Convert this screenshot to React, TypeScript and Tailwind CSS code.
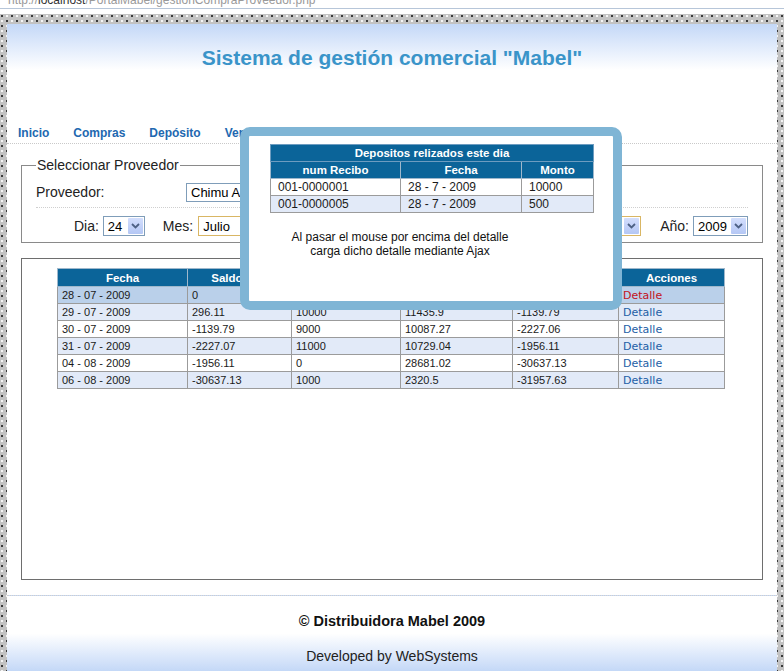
import React from "react";

const SANS = "font-['Liberation_Sans',Arial,Helvetica,sans-serif]";
const VERDANA = "font-['DejaVu_Sans',Verdana,sans-serif]";

const navItems = ["Inicio", "Compras", "Depósito", "Ventas", "Clientes", "Proveedores", "Reportes"];

const headers = ["Fecha", "Saldo Ant.", "Depósito", "Compras", "Saldo", "Acciones"];

const rows = [
  ["28 - 07 - 2009", "0", "10500", "10203.89", "296.11"],
  ["29 - 07 - 2009", "296.11", "10000", "11435.9", "-1139.79"],
  ["30 - 07 - 2009", "-1139.79", "9000", "10087.27", "-2227.06"],
  ["31 - 07 - 2009", "-2227.07", "11000", "10729.04", "-1956.11"],
  ["04 - 08 - 2009", "-1956.11", "0", "28681.02", "-30637.13"],
  ["06 - 08 - 2009", "-30637.13", "1000", "2320.5", "-31957.63"],
];

const depositos = [
  ["001-0000001", "28 - 7 - 2009", "10000"],
  ["001-0000005", "28 - 7 - 2009", "500"],
];

function Chevron() {
  return (
    <svg width="9" height="6" viewBox="0 0 9 6">
      <polyline points="1,1 4.5,4.5 8,1" fill="none" stroke="#4d6185" strokeWidth="1.8" />
    </svg>
  );
}

function Select({ value, className, focus }: { value: string; className: string; focus?: boolean }) {
  return (
    <div className={`flex items-center border bg-white ${focus ? "border-[#d9b664]" : "border-[#7f9db9]"} ${className}`}>
      <span className="pl-[4px] text-[13px] leading-none text-black">{value}</span>
      <span className="my-[1px] mr-[1px] ml-auto flex w-[15px] items-center justify-center self-stretch rounded-[1px] bg-linear-to-b from-[#d3defd] to-[#b4c7f5]">
        <Chevron />
      </span>
    </div>
  );
}

export default function App() {
  return (
    <div className={`relative flex h-[671px] flex-col overflow-hidden bg-white ${SANS}`}>
      {/* address bar, mostly scrolled off */}
      <div className="h-[14px] bg-white">
        <div className="h-[9px] overflow-hidden border-b border-[#b7c6d9] pl-[8px]">
          <div className="-mt-[7px] text-[12px] leading-[14px] text-[#9a9a9a]">
            http://<span className="text-[#333]">localhost</span>/PortalMabel/gestionCompraProveedor.php
          </div>
        </div>
      </div>

      {/* dotted frame */}
      <div className="flex min-h-0 flex-1 bg-[#c2c2c2] bg-[radial-gradient(circle_at_2px_2px,#3a3a3a_0.8px,transparent_1.4px),radial-gradient(circle_at_7px_7px,#3a3a3a_0.8px,transparent_1.4px),radial-gradient(circle_at_7px_2px,#f4f4f4_0.8px,transparent_1.4px),radial-gradient(circle_at_2px_7px,#f4f4f4_0.8px,transparent_1.4px)] bg-[length:10px_10px] pt-[10px] pr-[7px] pl-[7px]">
        <div className="flex flex-1 flex-col bg-white">
          {/* header */}
          <div className="bg-linear-to-b from-[#c4d8f7] to-white pt-[22px]">
            <h1 className="text-center text-[21px] leading-[24px] font-bold text-[#3a94c9]">
              Sistema de gestión comercial "Mabel"
            </h1>
          </div>

          {/* nav */}
          <nav className="mt-[55px] flex gap-[24px] border-b border-dotted border-[#c9c9c9] pb-[2px] pl-[11px]">
            {navItems.map((n) => (
              <span key={n} className="text-[12px] leading-[16px] font-bold text-[#2268b0]">
                {n}
              </span>
            ))}
          </nav>

          {/* proveedor */}
          <fieldset className="mx-[14px] mt-[13px] border border-[#8a8a8a] px-[14px] pb-[6px]">
            <legend className="px-[1px] text-[14px] leading-[16px] text-[#222]">Seleccionar Proveedor</legend>
            <div className="mt-[8px] flex h-[22px] items-center">
              <span className="w-[150px] text-[14px] text-[#222]">Proveedor:</span>
              <Select value="Chimu Agropecuaria" className="h-[19px] w-[200px]" />
            </div>
            <div className="h-[5px] border-b border-dotted border-[#cfcfcf]" />
            <div className="mt-[8px] flex h-[20px] items-center justify-end text-[14px] text-[#222]">
              <span>Dia:</span>
              <Select value="24" className="ml-[4px] h-[20px] w-[42px]" />
              <span className="ml-[18px]">Mes:</span>
              <Select value="Julio" focus className="ml-[5px] h-[20px] w-[443px]" />
              <span className="ml-[19px]">Año:</span>
              <Select value="2009" className="ml-[4px] h-[20px] w-[55px]" />
            </div>
          </fieldset>

          {/* results */}
          <div className="mx-[14px] mt-[15px] h-[322px] border border-[#6e6e6e] pt-[9px]">
            <table className="ml-[35px] w-[667px] table-fixed border-collapse">
              <colgroup>
                <col className="w-[130px]" />
                <col className="w-[104px]" />
                <col className="w-[109px]" />
                <col className="w-[112px]" />
                <col className="w-[106px]" />
                <col className="w-[106px]" />
              </colgroup>
              <thead>
                <tr className="h-[18px] bg-[#0b6499]">
                  {headers.map((h) => (
                    <th key={h} className="border border-[#9fb8cc] p-0 text-center text-[11.5px] leading-[16px] font-bold text-white">
                      {h}
                    </th>
                  ))}
                </tr>
              </thead>
              <tbody>
                {rows.map((r, i) => (
                  <tr
                    key={r[0]}
                    className={`h-[17px] ${i === 0 ? "bg-[#bad0ea]" : i % 2 === 1 ? "bg-[#e2eaf8]" : "bg-white"}`}
                  >
                    {r.map((c, j) => (
                      <td key={j} className="border border-[#9b9b9b] p-0 pl-[4px] text-[11px] leading-[15px] text-[#1a1a1a]">
                        {c}
                      </td>
                    ))}
                    <td className={`border border-[#9b9b9b] p-0 pl-[4px] text-[11px] leading-[15px] ${VERDANA} ${i === 0 ? "text-[#c3121c]" : "text-[#1d5ea6]"}`}>
                      Detalle
                    </td>
                  </tr>
                ))}
              </tbody>
            </table>
          </div>

          {/* footer */}
          <div className="mt-[15px] flex flex-1 flex-col items-center border-t border-dotted border-[#cfcfcf] bg-linear-to-b from-white from-50% to-[#c4d8f7] pt-[16px]">
            <p className="text-[14.5px] leading-[18px] font-bold text-[#111]">© Distribuidora Mabel 2009</p>
            <p className="mt-[17px] text-[14px] leading-[18px] text-[#222]">Developed by WebSystems</p>
          </div>
        </div>
      </div>

      {/* ajax popup */}
      <div className="absolute top-[127px] left-[240px] h-[183px] w-[382px] rounded-[10px] border-[9px] border-[#7fb5d5] bg-white">
        <table className="mt-[8px] ml-[21px] w-[323px] table-fixed border-collapse">
          <colgroup>
            <col className="w-[130px]" />
            <col className="w-[121px]" />
            <col className="w-[72px]" />
          </colgroup>
          <thead>
            <tr className="h-[17px] bg-[#0b6499]">
              <th colSpan={3} className="border border-[#6d9cc0] p-0 text-center text-[11.5px] leading-[15px] font-bold text-white">
                Depositos relizados este dia
              </th>
            </tr>
            <tr className="h-[17px] bg-[#0b6499]">
              {["num Recibo", "Fecha", "Monto"].map((h) => (
                <th key={h} className="border border-[#9fb8cc] p-0 text-center text-[11.5px] leading-[15px] font-bold text-white">
                  {h}
                </th>
              ))}
            </tr>
          </thead>
          <tbody>
            {depositos.map((d, i) => (
              <tr key={d[0]} className={`h-[17px] ${i % 2 === 1 ? "bg-[#e2eaf8]" : "bg-white"}`}>
                {d.map((c, j) => (
                  <td key={j} className="border border-[#9b9b9b] p-0 pl-[7px] text-[12px] leading-[15px] text-[#1a1a1a]">
                    {c}
                  </td>
                ))}
              </tr>
            ))}
          </tbody>
        </table>
        <p className="mt-[17px] ml-[21px] w-[260px] text-center text-[12px] leading-[14px] text-[#111]">
          Al pasar el mouse por encima del detalle
          <br />
          carga dicho detalle mediante Ajax
        </p>
      </div>
    </div>
  );
}
